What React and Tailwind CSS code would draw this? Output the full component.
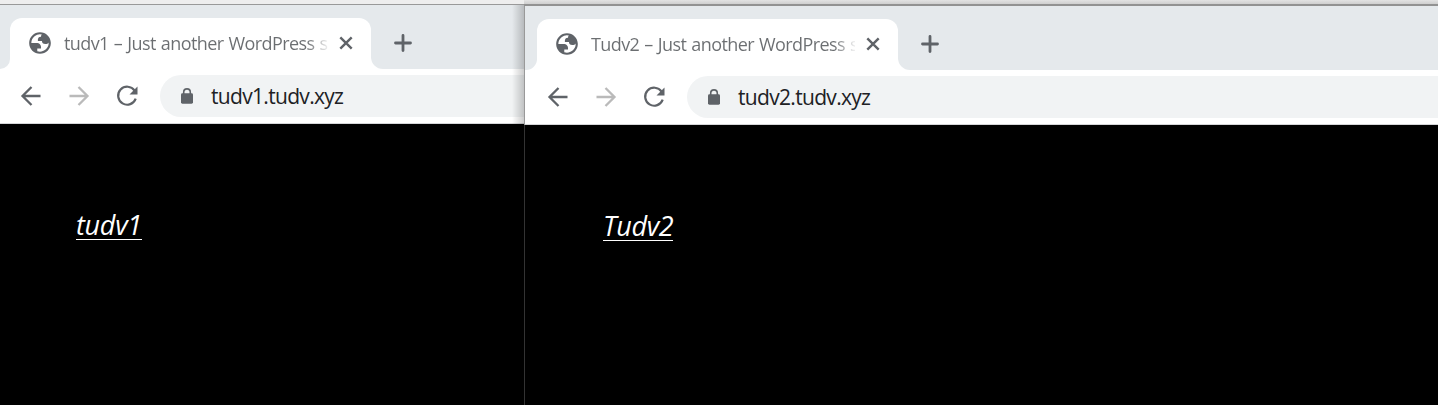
import React from "react";

function Globe() {
  return (
    <svg className="mb-0.5 h-[26px] w-[26px] shrink-0" viewBox="0 0 24 24" fill="#5f6368">
      <path
        fillRule="evenodd"
        d="M12 2C6.48 2 2 6.48 2 12s4.48 10 10 10 10-4.48 10-10S17.52 2 12 2zM4 12h4.4c3.407.022 4.922 1.73 4.543 5.127H9.488v2.47a8.004 8.004 0 0 0 10.498-8.08C19.327 12.5 18.332 13 17 13c-2.137 0-3.206-.916-3.206-2.75h-3.748c-.274-2.728.683-4.092 2.87-4.092 0-.975.327-1.597.811-1.97A8.004 8.004 0 0 0 4 12z"
      />
    </svg>
  );
}

function Arrow({ className }) {
  return (
    <svg className={className} viewBox="0 0 22 20" fill="none" stroke="currentColor" strokeWidth="2.3">
      <path d="M20.5 10H2.5M11.5 1 2.5 10l9 9" />
    </svg>
  );
}

function Browser({ title, url, heading, className, startClass, navClass, bodyClass }) {
  return (
    <section className={"flex h-full flex-col overflow-hidden bg-black " + className}>
      <div className="flex h-16 shrink-0 items-end bg-[#e5e9ec]">
        <div className={"h-[51px] shrink-0 bg-white " + startClass}>
          <div className="h-full w-full rounded-br-[11px] bg-[#e5e9ec]" />
        </div>
        <div className="flex h-[51px] w-[361px] shrink-0 items-center rounded-t-[12px] bg-white pl-[17px]">
          <Globe />
          <div className="mb-0.5 ml-[11px] h-6 w-[264px] whitespace-nowrap bg-linear-to-r from-[#6b6e71] from-92% to-[#6b6e71]/10 to-100% bg-clip-text font-['Open_Sans',sans-serif] text-[18px] leading-6 tracking-[-0.6px] text-transparent [word-spacing:1px]">
            {title} – Just another WordPress s
          </div>
          <svg className="mb-px ml-[11px] h-3.5 w-3.5 shrink-0" viewBox="0 0 14 14" stroke="#5f6368" strokeWidth="2.4">
            <path d="m1.3 1.3 11.4 11.4m0-11.4L1.3 12.7" />
          </svg>
        </div>
        <div className="h-[51px] grow bg-white">
          <div className="flex h-full items-center rounded-bl-[12px] bg-[#e5e9ec] pb-px pl-[23px]">
            <svg className="h-[18px] w-[18px]" viewBox="0 0 18 18" stroke="#5f6368" strokeWidth="2.8" strokeLinecap="round">
              <path d="M9 1.5v15M1.5 9h15" />
            </svg>
          </div>
        </div>
      </div>
      <div className={"flex h-[55px] shrink-0 items-center border-b border-[#d5d6d8] bg-white " + navClass}>
        <Arrow className="mb-px h-5 w-[22px] shrink-0 text-[#5f6368]" />
        <Arrow className="mb-px ml-[26px] h-5 w-[22px] shrink-0 -scale-x-100 text-[#bababa]" />
        <svg className="mb-px ml-[26px] h-[22px] w-[22px] shrink-0" viewBox="0 0 22 22" fill="none">
          <path d="M18.6 5.6A9 9 0 1 0 19.7 13.6" stroke="#5f6368" strokeWidth="2.2" />
          <path d="M21.5 1.5v8h-8z" fill="#5f6368" />
        </svg>
        <div className="ml-[22px] flex h-[42px] grow items-center rounded-l-[21px] bg-[#f1f3f4] pl-[20px]">
          <svg className="h-4 w-[14px] shrink-0" viewBox="0 0 14 16">
            <path d="M3.7 7V4.2a3.3 3.3 0 0 1 6.6 0V7" fill="none" stroke="#5f6368" strokeWidth="1.6" />
            <rect x="1" y="5.3" width="12" height="10.4" rx="1.4" fill="#5f6368" />
          </svg>
          <span className="ml-[17px] whitespace-nowrap font-['Open_Sans',sans-serif] text-[21px] leading-7 tracking-[-0.68px] text-[#202124]">
            {url}
          </span>
        </div>
      </div>
      <div className={"pt-[86px] font-['Open_Sans',sans-serif] text-[27px] italic leading-[30px] tracking-[-0.3px] text-white " + bodyClass}>
        <span className="inline-block h-[30px] border-b border-white">{heading}</span>
      </div>
    </section>
  );
}

export default function App() {
  return (
    <main className="flex h-[405px] w-[1438px] overflow-hidden bg-black">
      <div className="flex w-[524px] shrink-0 flex-col">
        <div className="h-[5px] shrink-0 border-b border-[#999] bg-[#eeeeee]" />
        <div className="relative min-h-0 grow">
          <Browser
            title="tudv1"
            url="tudv1.tudv.xyz"
            heading="tudv1"
            className="w-full"
            startClass="w-[10px]"
            navClass="pl-5"
            bodyClass="pl-[76px]"
          />
          <div className="absolute inset-y-0 right-0 w-3 bg-linear-to-r from-transparent to-black/20" />
        </div>
      </div>
      <div className="flex min-w-0 grow flex-col">
        <div className="h-1 shrink-0 bg-linear-to-b from-[#e3e3e3] to-[#cfcfcf]" />
        <div className="h-0.5 shrink-0 bg-[#929292]" />
        <div className="flex min-h-0 grow">
          <div className="flex w-px shrink-0 flex-col">
            <div className="h-[119px] bg-[#999]" />
            <div className="grow bg-[#333]" />
          </div>
          <Browser
            title="Tudv2"
            url="tudv2.tudv.xyz"
            heading="Tudv2"
            className="min-w-0 grow"
            startClass="w-3"
            navClass="pl-[22px]"
            bodyClass="pl-[78px]"
          />
        </div>
      </div>
    </main>
  );
}
